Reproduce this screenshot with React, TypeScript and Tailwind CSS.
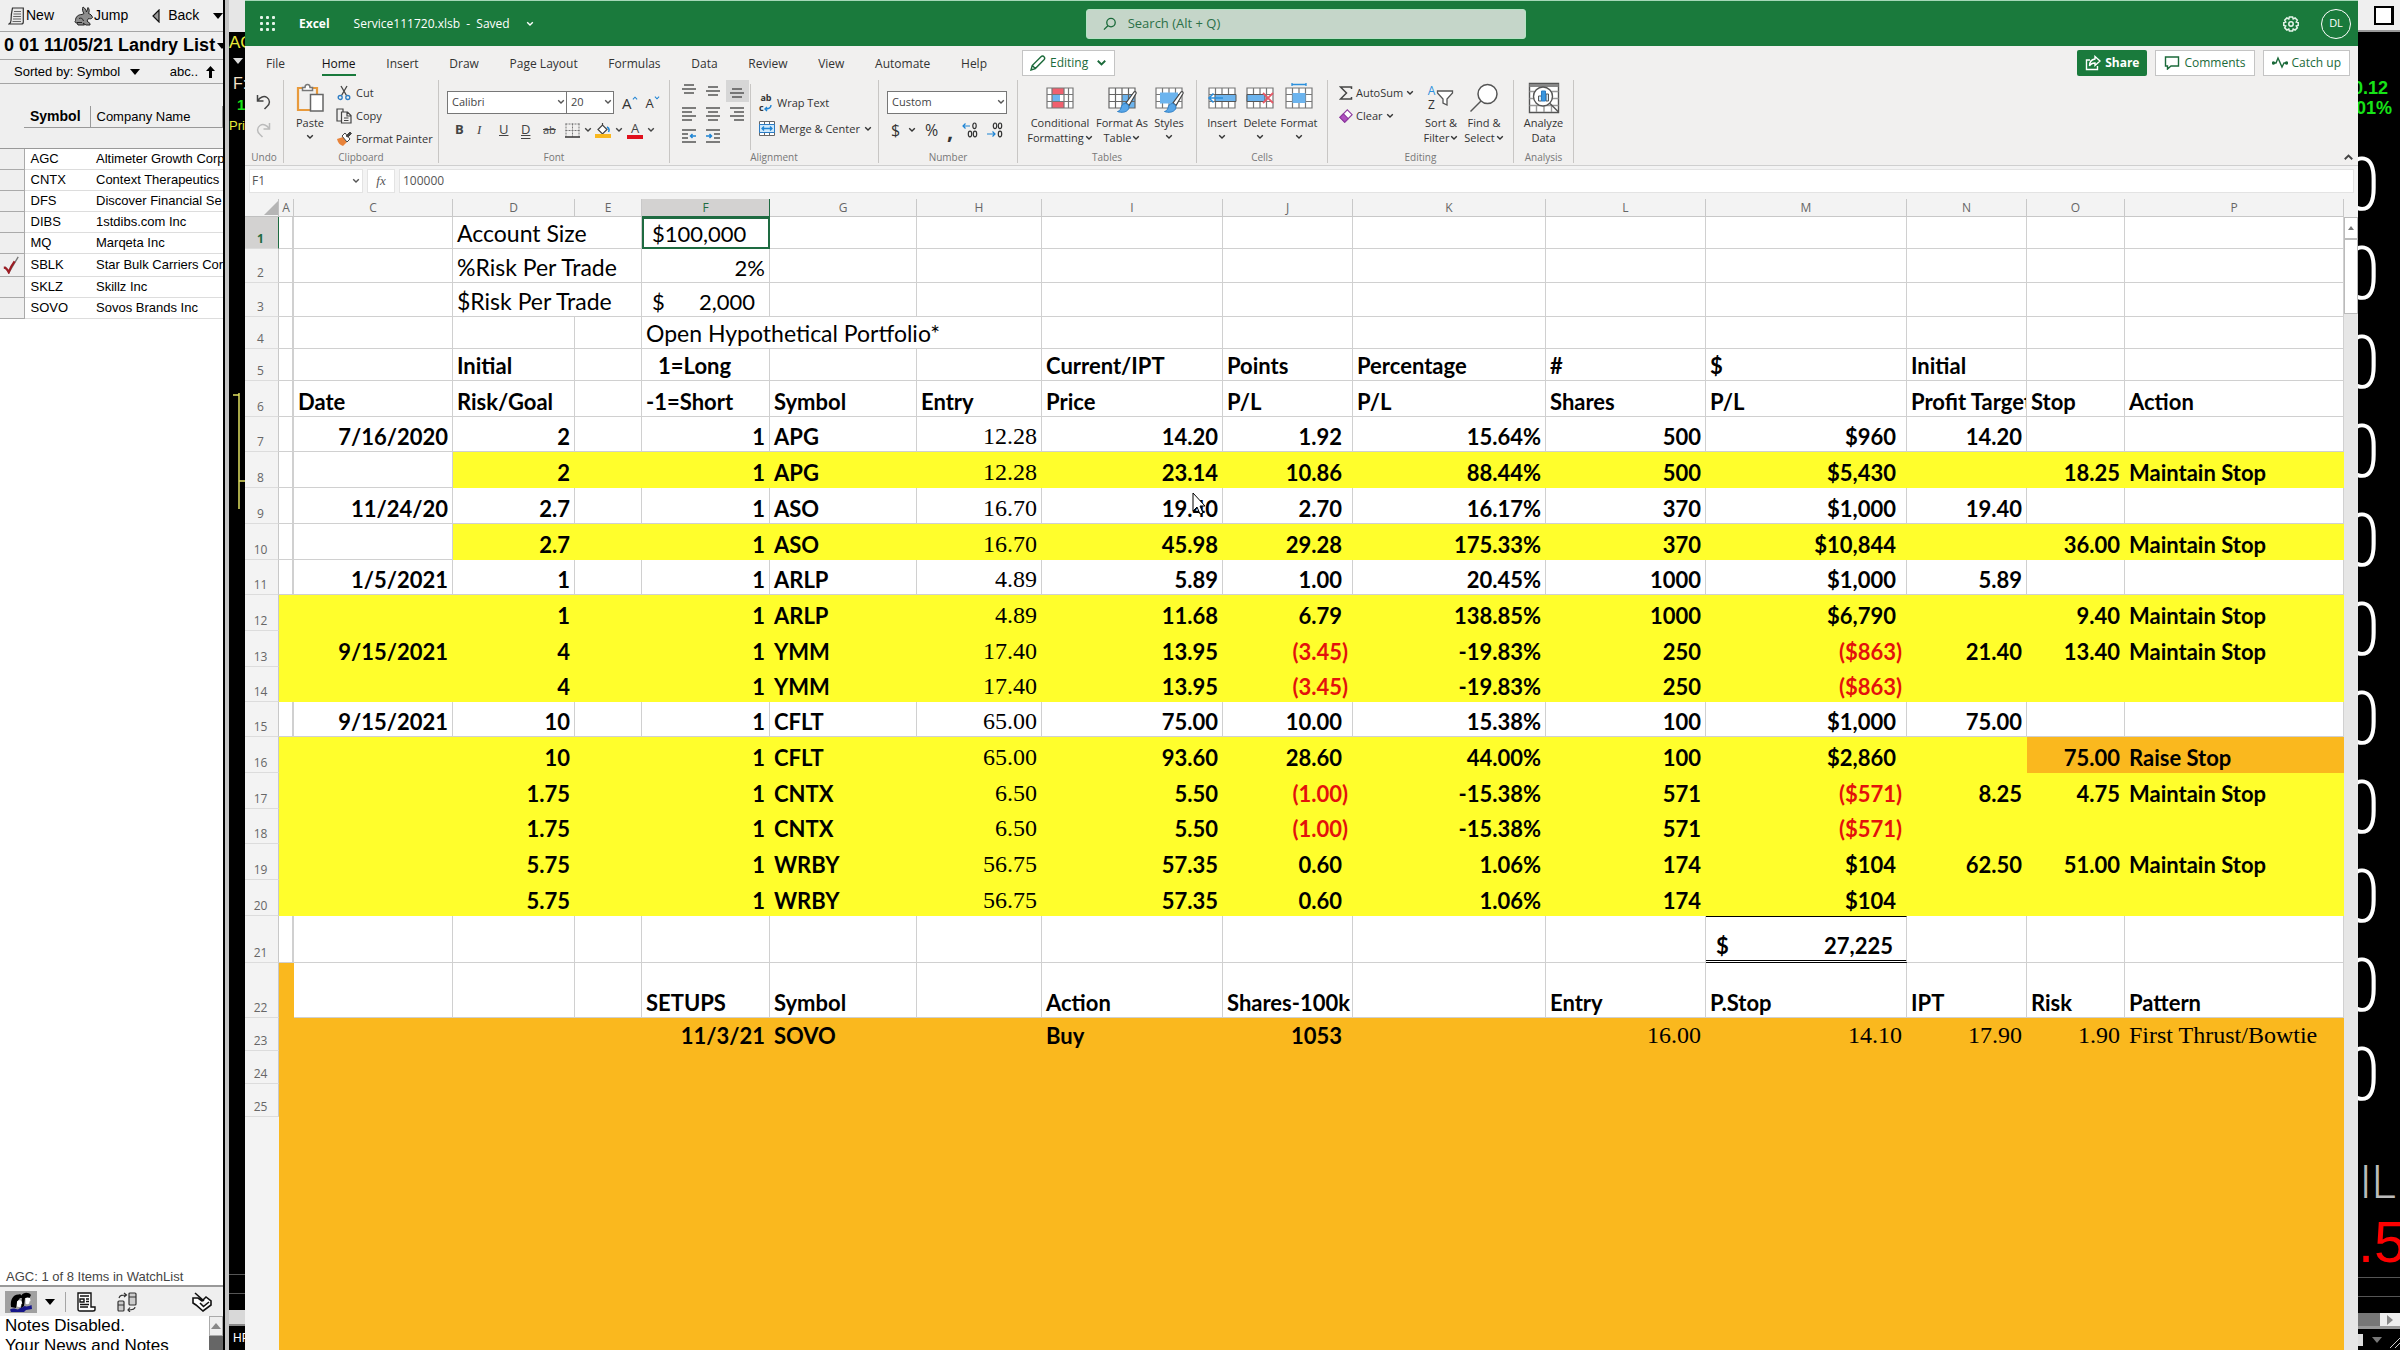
import React from 'react';
import clsx from 'clsx';

type IconProps = { className?: string };

const Chevron: React.FC<IconProps> = ({ className }) => (
    <svg viewBox="0 0 8 6" className={clsx('h-[6px] w-2 shrink-0', className)} fill="none" stroke="currentColor" strokeWidth="1.4">
        <path d="M1.2 1.3 4 4.1 6.8 1.3" />
    </svg>
);

/* ---------- Watch list (left) ---------- */

const watchList = [
    ['AGC', 'Altimeter Growth Corp'],
    ['CNTX', 'Context Therapeutics'],
    ['DFS', 'Discover Financial Se'],
    ['DIBS', '1stdibs.com Inc'],
    ['MQ', 'Marqeta Inc'],
    ['SBLK', 'Star Bulk Carriers Corp'],
    ['SKLZ', 'Skillz Inc'],
    ['SOVO', 'Sovos Brands Inc'],
];

const Caret: React.FC<IconProps> = ({ className }) => (
    <svg viewBox="0 0 10 6" className={clsx('h-[6px] w-[10px] shrink-0', className)} fill="currentColor">
        <path d="M0 0h10L5 6z" />
    </svg>
);

const WatchPanel = () => (
    <aside className="flex w-[225px] shrink-0 flex-col overflow-hidden border-r-2 border-black bg-[#efefef] font-['Liberation_Sans',sans-serif] text-black">
        <div className="flex h-8 shrink-0 items-center border-b border-[#a5a5a5] pl-2 text-[14px]">
            <button className="flex items-center gap-[2px]">
                <svg viewBox="0 0 16 18" className="h-[18px] w-4" fill="#e8e8e8" stroke="#333" strokeWidth="1.2">
                    <path d="M4.5 1h10.8v14c0 1-.8 2-2 2H1c1.500-1 2-2 2-3.500C3 9 3.500 5 4.500 1z" />
                    <path d="M6 4.500h7M5.500 7h7.500M5.200 9.500H13M5 12h8M4.500 14.500H13" stroke="#666" />
                </svg>
                New
            </button>
            <span className="mx-[10px] h-5 w-px bg-[#a5a5a5]" />
            <button className="flex items-center">
                <svg viewBox="0 0 20 20" className="h-5 w-5" fill="#8d8d8d" stroke="#222" strokeWidth="1">
                    <path d="M9 1c2 1 3 3 3.500 5L14 1.500c1.500 1.500 1.500 4 .5 6 2 .5 3.500 2 4 4-1 1.500-2.500 1.500-4 1l-1.500 2.500 3 2.500v1.500h-4L9 17l1.500 2H4l-1-2c-2 0-2.500-1.500-1.500-2.500C1.500 11 4 8.500 8 8.500l2-1C8.500 5.500 8 3 9 1z" />
                    <path d="M5 12.500c2-1 4 0 4.500 2.500M3 16.500h5" fill="none" />
                </svg>
                Jump
            </button>
            <span className="mx-[10px] h-5 w-px bg-[#a5a5a5]" />
            <button className="flex items-center">
                <svg viewBox="0 0 8 14" className="mr-2 ml-1 h-[14px] w-2" fill="#999" stroke="#111" strokeWidth="1.2">
                    <path d="M7 1v12L1 7z" />
                </svg>
                Back
                <Caret className="ml-[14px]" />
            </button>
        </div>
        <div className="flex h-7 shrink-0 items-center justify-between overflow-hidden border-b border-[#a5a5a5] pl-1 text-[18px] font-bold whitespace-nowrap">
            0 01 11/05/21 Landry List
            <Caret className="-mr-1" />
        </div>
        <div className="flex h-6 shrink-0 items-center border-b border-[#a5a5a5] pr-2 pl-[14px] text-[13px] whitespace-nowrap">
            Sorted by: Symbol
            <Caret className="ml-[10px]" />
            <span className="ml-auto">abc..</span>
            <svg viewBox="0 0 9 12" className="ml-2 h-3 w-[9px]" fill="#000">
                <path d="M4.500 0 9 5H6v7H3V5H0z" />
            </svg>
        </div>
        <table className="mt-[22px] w-full table-fixed text-left text-[13px] whitespace-nowrap">
            <colgroup>
                <col className="w-6" />
                <col className="w-[66px]" />
                <col />
            </colgroup>
            <thead>
                <tr className="h-5">
                    <td />
                    <th className="border-r border-b border-[#999] pl-[6px] text-[14px] font-bold">Symbol</th>
                    <th className="border-r border-b border-[#999] pl-[6px] font-normal">Company Name</th>
                </tr>
                <tr className="h-[21px]"><td colSpan={3} className="border-b border-[#999]" /></tr>
            </thead>
        </table>
        <div className="flex flex-1 flex-col bg-white">
            <table className="h-[170px] w-full table-fixed text-left text-[13px] leading-4 whitespace-nowrap">
                <colgroup>
                    <col className="w-6" />
                    <col className="w-[66px]" />
                    <col />
                </colgroup>
                <tbody>
                    {watchList.map(([symbol, company]) => (
                        <tr key={symbol}>
                            <td className="border-r border-b border-[#aaa] bg-[#efefef] p-0">
                                {symbol === 'SBLK' && (
                                    <svg viewBox="0 0 20 20" className="h-[18px] w-[22px]" fill="none">
                                        <path d="M3 12l5 6L18 1" stroke="#777" strokeWidth="1.5" />
                                        <path d="M2 13c2 0 4 2 5.500 5C9 14 11 10 14 6" stroke="#9c1c24" strokeWidth="2.500" />
                                    </svg>
                                )}
                            </td>
                            <td className="border-b border-[#ddd] p-0 pl-[6px]">{symbol}</td>
                            <td className="overflow-hidden border-b border-[#ddd] p-0 pl-[6px]">{company}</td>
                        </tr>
                    ))}
                </tbody>
            </table>
            <p className="mt-auto pl-[6px] text-[13px] leading-4 text-[#444]">AGC: 1 of 8 Items in WatchList</p>
        </div>
        <div className="flex h-[31px] shrink-0 items-center border-t-2 border-[#999] pr-[10px] pl-[5px]">
            <button aria-label="Groups" className="flex h-[22px] w-8 items-center justify-center bg-[#a0a0a0]">
                <svg viewBox="0 0 22 20" className="h-5 w-[22px]">
                    <path d="M1 15C0 8 3 2 9 2.500c1-.5 2 0 2.500 1C13 0 19 0 21 3l-1.500 3H10L7 10l-1 6z" fill="#000" />
                    <path d="M12 5l3 1-1 8-3 3z" fill="#000" />
                    <path d="M7 9.500c1.500-1.500 3.500-1.500 4.500-.5l.8 2.500-1 .5-.3 2c-1 1.500-3 1-4 .5zM15.500 6c1.500-1 3.500-.5 4.500 0l.5 3-1 .5-.3 2c-1 1-3 .8-3.700 0z" fill="#fff" />
                    <path d="M0 17.500c3-2 6-.5 8 0 2-1.500 3-2 4.500-2l2-1.500c2 1 5 0 7-1l.5 4-6 1-2 2H1z" fill="#16168a" />
                </svg>
            </button>
            <Caret className="ml-2" />
            <span className="ml-[10px] h-5 w-px bg-[#a5a5a5]" />
            <button aria-label="Notes" className="ml-[10px]">
                <svg viewBox="0 0 20 20" className="h-5 w-5" fill="#fff" stroke="#111" strokeWidth="1.4">
                    <path d="M2 1h13v14h4v2.500c0 1-1 1.500-2 1.500H4c-1.500 0-2-1-2-2z" />
                    <path d="M4 4h9M10 7h3M10 9.500h3M4 12.500h9M4 15h8M4 7h4v3H4z" />
                </svg>
            </button>
            <button aria-label="Transfer" className="ml-5">
                <svg viewBox="0 0 22 20" className="h-5 w-[22px]" fill="#ccc" stroke="#333" strokeWidth="1.2">
                    <rect x="2" y="9" width="6" height="10" rx="1" />
                    <rect x="13" y="1" width="7" height="12" rx="1" />
                    <path d="M2 13h6M13 5h7" />
                    <path d="M3 6c1-3 3-3 7-3M8 1l2.500 2L8 5M19 15c0 2-2 3-7 3M14 15.500 12 18l2 2" fill="none" />
                </svg>
            </button>
            <button aria-label="Tag" className="ml-auto">
                <svg viewBox="0 0 22 20" className="h-5 w-[22px]" fill="#fff" stroke="#111" strokeWidth="1.600">
                    <path d="M2 6h5l4 3 4-4 5 4v4l-8 6-7-6-3-2zM4 1l9 8M9 11l3.500 3.500L18 10" />
                </svg>
            </button>
        </div>
        <div className="flex h-[34px] shrink-0 overflow-hidden bg-white">
            <p className="flex-1 pl-[5px] text-[17px] leading-[20px] whitespace-nowrap">
                Notes Disabled.
                <br />
                Your News and Notes
            </p>
            <div className="w-[14px] bg-[#666]">
                <div className="flex h-5 items-center justify-center border border-[#aaa] bg-[#eee] text-[#888]">
                    <Caret className="rotate-180" />
                </div>
            </div>
        </div>
    </aside>
);

/* ---------- Chart slivers behind the workbook ---------- */

const ChartSliver = () => (
    <div className="flex w-5 shrink-0 flex-col overflow-hidden border-l-4 border-[#c4c4c4] bg-black font-['Liberation_Sans',sans-serif] whitespace-nowrap">
        <div className="-ml-1 h-8 shrink-0 bg-[#e6e6e6]" />
        <p className="text-[17px] leading-[22px] text-[#e8e83a]">AG</p>
        <Caret className="mt-1 ml-1 text-[#ddd]" />
        <p className="mt-2 ml-1 text-[16px] leading-6 text-[#f5e2c8]">F:</p>
        <p className="ml-2 text-[15px] leading-[18px] font-bold text-[#17e317]">1</p>
        <p className="text-[13px] leading-6 text-[#e8e83a]">Pri</p>
        <svg viewBox="0 0 16 118" className="mt-[255px] h-[118px] w-4 shrink-0" fill="none" stroke="#e0e060" strokeWidth="1.500">
            <path d="M4 2h6M10 0v116M10 88h6" />
        </svg>
        <div className="mt-auto h-5 shrink-0 border-y border-[#555]" />
        <div className="mt-4 h-4 shrink-0 border-b-2 border-[#888] bg-[#d8d8d8]" />
        <div className="h-6 shrink-0 px-1 pt-1 text-[12px] leading-4 text-white">HP</div>
    </div>
);

const QuoteSliver = () => (
    <div className="flex w-[42px] shrink-0 flex-col overflow-hidden bg-black font-['Liberation_Sans',sans-serif] whitespace-nowrap">
        <div className="flex h-8 shrink-0 items-center border-b-2 border-[#999] bg-[#efefef] pl-4">
            <button aria-label="Maximize" className="h-[19px] w-5 border-2 border-r-[3px] border-black bg-white" />
        </div>
        <div className="mt-[46px] flex flex-col items-end pr-2 text-[18px] leading-5 font-bold text-[#17e317]">
            <span className="pr-1">0.12</span>
            <span>.01%</span>
        </div>
        <div className="mt-[22px] flex flex-col items-end pr-5 font-['Roboto_Condensed','Liberation_Sans_Narrow',sans-serif] text-[74px] leading-[89px] font-light text-white">
            {Array.from({ length: 11 }, (_, i) => (
                <span key={i}>0</span>
            ))}
        </div>
        <p className="mt-auto pr-1 text-right font-['Roboto',sans-serif] text-[46px] leading-[50px] font-light text-[#bbb]">IL</p>
        <p className="mt-1 text-right text-[58px] leading-[62px] text-[#fe0000]">.5</p>
        <div className="mt-1 h-5 shrink-0 border-y border-[#555]" />
        <div className="mt-4 flex h-4 shrink-0 border-b-[3px] border-[#999]">
            <div className="w-[22px] bg-[#777]" />
            <div className="flex flex-1 items-center justify-center bg-[#eee] text-[#888]">
                <Caret className="-rotate-90" />
            </div>
        </div>
        <div className="flex h-[21px] shrink-0 items-center justify-between text-[#777]">
            <span className="h-3 w-[5px] bg-[#ddd]" />
            <Caret />
            <svg viewBox="0 0 10 16" className="h-4 w-[10px]" stroke="#ccc">
                <path d="M0 16 10 6M5 16l5-5" />
            </svg>
        </div>
    </div>
);

/* ---------- Excel chrome ---------- */

const TitleBar = () => (
    <header className="flex h-[46px] shrink-0 items-center border-t border-[#a5d8b8] bg-[#1a7a3c] pr-[7px] pl-[15px] text-white">
        <div className="flex flex-1 items-center">
            <button aria-label="App launcher">
                <svg viewBox="0 0 15 15" className="h-[15px] w-[15px]" fill="#e6f5ea">
                    {[0, 6, 12].map((x) => [0, 6, 12].map((y) => <rect key={x + '-' + y} x={x} y={y} width="3" height="3" rx="1" />))}
                </svg>
            </button>
            <span className="ml-6 text-[12px] font-bold">Excel</span>
            <button className="ml-6 flex items-center text-[12px]">
                Service111720.xlsb&nbsp; - &nbsp;Saved
                <Chevron className="ml-4" />
            </button>
        </div>
        <label className="flex h-[30px] w-[440px] items-center rounded-[3px] border border-[#b5e3c4] bg-[#c5d6c9] pl-4 text-[#1b6a3a]">
            <svg viewBox="0 0 14 14" className="h-[14px] w-[14px]" fill="none" stroke="currentColor" strokeWidth="1.400">
                <circle cx="8.500" cy="5.500" r="4.500" />
                <path d="M5.200 8.800 1 13" />
            </svg>
            <input aria-label="Search" placeholder="Search (Alt + Q)" className="ml-3 w-full bg-transparent text-[13px] outline-none placeholder:text-[#2c7048]" />
        </label>
        <div className="flex flex-1 items-center justify-end">
            <button aria-label="Settings">
                <svg viewBox="0 0 16 16" className="h-4 w-4" fill="none" stroke="#e6f5ea" strokeWidth="1.500">
                    <path d="M6.400 1h3.200l.6 1.900 1.900-.9 2.200 2.200-1 1.800 1.900.6v2.800l-1.900.6 1 1.800-2.200 2.200-1.900-.9-.6 1.900H6.400l-.6-1.900-1.900.9-2.200-2.200 1-1.800-1.900-.6V6.600l1.900-.6-1-1.800L3.900 2l1.900.9z" />
                    <circle cx="8" cy="8" r="2.200" />
                </svg>
            </button>
            <button className="ml-[22px] h-[30px] w-[30px] rounded-full border border-white text-[11px]">DL</button>
        </div>
    </header>
);

const tabs = ['File', 'Home', 'Insert', 'Draw', 'Page Layout', 'Formulas', 'Data', 'Review', 'View', 'Automate', 'Help'];

const TabBar = () => (
    <nav className="flex h-[34px] shrink-0 items-center pr-2 pl-[21px] text-[12px] text-[#333]">
        <div className="flex w-[721px] justify-between">
            {tabs.map((tab) => (
                <a
                    key={tab}
                    href="#"
                    className={clsx(
                        'border-b-2 pt-[3px] leading-[20px] whitespace-nowrap',
                        tab === 'Home' ? 'border-[#1a7a3c] text-[#111]' : 'border-transparent',
                        tab === 'File' && 'mr-[6px]',
                    )}
                >
                    {tab}
                </a>
            ))}
        </div>
        <button className="ml-[35px] flex h-[26px] items-center gap-1 border border-[#c4c4c4] bg-white px-[7px] text-[#1b6a3a]">
            <svg viewBox="0 0 16 16" className="h-4 w-4" fill="none" stroke="currentColor" strokeWidth="1.400">
                <path d="M1 15l1.200-4.500L11 1.700c1-1 2.300-.8 3 0 .8.800.9 2 0 3L5.300 13.600zM2.300 10.600l3 3" />
            </svg>
            Editing
            <Chevron className="ml-1 !h-2 !w-[11px]" />
        </button>
        <div className="ml-auto flex gap-2">
            <button className="flex h-[26px] items-center gap-1 rounded-[2px] bg-[#1a7a3c] px-2 font-bold text-white">
                <svg viewBox="0 0 16 16" className="h-4 w-4" fill="none" stroke="currentColor" strokeWidth="1.400">
                    <path d="M5 5H1.500v9.500h11V11M10 1.500 15 6l-5 4.500V8C7 8 5.500 9 4.500 11c0-3.500 2-6.500 5.500-7z" />
                </svg>
                Share
            </button>
            <button className="flex h-[26px] items-center gap-1 border border-[#c4c4c4] bg-white px-2 text-[#1b6a3a]">
                <svg viewBox="0 0 16 14" className="h-[14px] w-4" fill="none" stroke="currentColor" strokeWidth="1.400">
                    <path d="M1.500 1h13v9H7l-3.500 3V10h-2z" />
                </svg>
                Comments
            </button>
            <button className="flex h-[26px] items-center gap-1 border border-[#c4c4c4] bg-white px-2 text-[#1b6a3a]">
                <svg viewBox="0 0 16 14" className="h-[14px] w-4" fill="none" stroke="currentColor" strokeWidth="1.400">
                    <path d="M1 7h3l2-5 4 9 2-4h3" />
                    <circle cx="1.500" cy="7" r="1" fill="currentColor" />
                    <circle cx="14.500" cy="7" r="1" fill="currentColor" />
                </svg>
                Catch up
            </button>
        </div>
    </nav>
);

type GroupProps = { label: string; className: string; children: React.ReactNode };

const Group: React.FC<GroupProps> = ({ label, className, children }) => (
    <section className={clsx('flex shrink-0 flex-col border-r border-[#c8c6c4]', className)}>
        <div className="flex flex-1">{children}</div>
        <h2 className="text-center text-[10px] leading-[12px] text-[#777]">{label}</h2>
    </section>
);

type BigButtonProps = { icon: React.ReactNode; lines: string[]; className?: string; chevron?: 'below' | 'inline' };

const BigButton: React.FC<BigButtonProps> = ({ icon, lines, className, chevron }) => (
    <button className={clsx('flex shrink-0 flex-col items-center text-[11px] leading-[15px] text-[#333]', className)}>
        <span className="flex h-[35px] items-center">{icon}</span>
        {lines.map((line, i) => (
            <span key={line} className="flex items-center gap-px whitespace-nowrap">
                {line}
                {chevron === 'inline' && i === lines.length - 1 && <Chevron />}
            </span>
        ))}
        {chevron === 'below' && <Chevron className="mt-1" />}
    </button>
);

const SheetIcon: React.FC<{ children: React.ReactNode }> = ({ children }) => (
    <svg viewBox="0 0 30 30" className="h-[30px] w-[30px]" fill="none">
        <path d="M2 5h26v20H2z" fill="#fff" />
        {children}
    </svg>
);

const gridPath = 'M2 5h26v20H2zM2 11.500h26M2 18.500h26M8.500 5v20M15 5v20M21.500 5v20';

const Brush = () => (
    <>
        <path d="M27 9 19 20l3 2.500 7-12c.5-1.500-1-2.500-2-1.500z" fill="#fff" stroke="#444" strokeWidth="1.200" />
        <path d="M18.500 20.500c-3 0-4 2-4.500 4.500-.5 2-2 3-3.500 3.500 4 1.500 9 1 11-2.500 1-2 0-5-3-5.500z" fill="#58a6e8" stroke="#2b7cc4" />
    </>
);

const LinesIcon: React.FC<{ d: string; active?: boolean; label: string; arrow?: string }> = ({ d, active, label, arrow }) => (
    <button aria-label={label} className={clsx('flex h-[22px] w-[23px] items-center justify-center', active && 'bg-[#d6d6d6]')}>
        <svg viewBox="0 0 14 14" className="h-[14px] w-[14px]" fill="none" stroke="#555" strokeWidth="1.300">
            <path d={d} />
            {arrow && <path d={arrow} stroke="#1e84d4" strokeWidth="1.500" />}
        </svg>
    </button>
);

const Picker: React.FC<{ label: string; value: string; className: string }> = ({ label, value, className }) => (
    <div className={clsx('relative', className)}>
        <select aria-label={label} className="h-[23px] w-full appearance-none border border-[#777] bg-white pl-1 text-[11px] text-[#444]">
            <option>{value}</option>
        </select>
        <Chevron className="pointer-events-none absolute top-2 right-[2px] text-[#555]" />
    </div>
);

const Ribbon = () => (
    <div className="flex h-[86px] shrink-0 border-b border-[#cfcfcf] text-[11px] text-[#333]">
        <div className="flex pb-[2px]">
            <Group label="Undo" className="w-[39px]">
                <div className="flex flex-col gap-3 pt-[14px] pl-[11px] text-[#444]">
                    <button aria-label="Undo">
                        <svg viewBox="0 0 15 16" className="h-4 w-[15px]" fill="none" stroke="currentColor" strokeWidth="1.500">
                            <path d="M1.500 1v6h6M1.800 6.500C4 3 8 1.500 11 3.500c3.500 2.500 3 6.500 0 9L8.500 15" />
                        </svg>
                    </button>
                    <button aria-label="Redo" className="text-[#bbb]">
                        <svg viewBox="0 0 15 16" className="h-4 w-[15px]" fill="none" stroke="currentColor" strokeWidth="1.500">
                            <path d="M13.500 1v6h-6M13.200 6.500C11 3 7 1.500 4 3.500c-3.500 2.500-3 6.500 0 9L6.500 15" />
                        </svg>
                    </button>
                </div>
            </Group>
            <Group label="Clipboard" className="w-[155px]">
                <BigButton
                    className="w-[52px]"
                    lines={['Paste']}
                    chevron="below"
                    icon={
                        <svg viewBox="0 0 28 30" className="h-[30px] w-7" fill="none" strokeWidth="1.500">
                            <path d="M8 5H2v22h12" stroke="#e89a3c" strokeWidth="2.200" />
                            <path d="M15 5h6v6" stroke="#e89a3c" strokeWidth="2.200" />
                            <path d="M6.500 7.500V4.500H9C9 2.500 10 1.500 11.500 1.500S14 2.500 14 4.500h2.500v3z" fill="#fff" stroke="#777" />
                            <path d="M14.500 11.500H27v16.500H14.500z" fill="#fff" stroke="#666" />
                        </svg>
                    }
                />
                <div className="flex flex-col pt-px leading-[23px] whitespace-nowrap">
                    <button className="flex items-center gap-1">
                        <svg viewBox="0 0 16 16" className="h-4 w-4" fill="none" strokeWidth="1.300">
                            <path d="M5 1l5.500 9.500M11 1 5.500 10.500" stroke="#444" />
                            <circle cx="4.200" cy="12.500" r="2" stroke="#2b7cc4" />
                            <circle cx="11.800" cy="12.500" r="2" stroke="#2b7cc4" />
                        </svg>
                        Cut
                    </button>
                    <button className="flex items-center gap-1">
                        <svg viewBox="0 0 16 16" className="h-4 w-4" fill="none" stroke="#444" strokeWidth="1.200">
                            <path d="M5 13H1V1h6v3M5.500 4h6L15 7.500V15H5.500zM11 4v4h4M8 10h4.500M8 12.500h4.500" />
                        </svg>
                        Copy
                    </button>
                    <button className="flex items-center gap-1">
                        <svg viewBox="0 0 16 16" className="h-4 w-4">
                            <path d="M1 8l6-2 4 5-4 4c-3-1-5-3-6-7z" fill="#e8833a" />
                            <path d="M6 5l3-3 5 6-3 3z" fill="#fff" stroke="#444" />
                            <path d="M10 5l4-4 1.500 1.500L12 6z" fill="#444" stroke="#444" />
                        </svg>
                        Format Painter
                    </button>
                </div>
            </Group>
            <Group label="Font" className="w-[231px]">
                <div className="flex w-full flex-col gap-1 pt-[11px] pl-2">
                    <div className="flex items-center">
                        <Picker label="Font" value="Calibri" className="w-[120px]" />
                        <Picker label="Font size" value="20" className="-ml-px w-[48px]" />
                        <button aria-label="Grow font" className="ml-2 flex text-[15px] leading-5">
                            A
                            <Chevron className="mt-[2px] !w-[6px] rotate-180 text-[#1e84d4]" />
                        </button>
                        <button aria-label="Shrink font" className="ml-2 flex text-[13px] leading-5">
                            A
                            <Chevron className="mt-[2px] !w-[6px] text-[#1e84d4]" />
                        </button>
                    </div>
                    <div className="flex h-6 items-center pl-2 text-[13px] text-[#444]">
                        <button className="w-[22px] text-left font-bold">B</button>
                        <button className="w-[22px] text-left font-['Liberation_Serif',serif] italic">I</button>
                        <button className="w-[22px] text-left underline">U</button>
                        <button className="w-[22px] text-left underline decoration-double">D</button>
                        <button className="w-[22px] text-left text-[11px] line-through">ab</button>
                        <button aria-label="Borders" className="flex w-[30px] items-center gap-1">
                            <svg viewBox="0 0 15 15" className="h-[15px] w-[15px]" fill="none" stroke="#777">
                                <path d="M.5 1h14M.5 7.500h14M1 .5v13M7.500.5v13M14 .5v13" strokeDasharray="2 1" />
                                <path d="M0 14h15" stroke="#333" strokeWidth="1.500" />
                            </svg>
                            <Chevron />
                        </button>
                        <button aria-label="Fill colour" className="flex w-8 items-center gap-1">
                            <svg viewBox="0 0 16 16" className="h-4 w-4" fill="none">
                                <path d="M3 7.500 7.500 3l4.500 4.500L7.500 12zM7.500 3V1" stroke="#444" strokeWidth="1.200" fill="#fff" />
                                <path d="M12 5c2 1 2.500 3 1.500 5" stroke="#1e84d4" strokeWidth="1.500" />
                                <path d="M0 12h16v4H0z" fill="#fab81e" />
                            </svg>
                            <Chevron />
                        </button>
                        <button aria-label="Font colour" className="flex w-8 items-center gap-1">
                            <span className="w-4 border-b-4 border-[#e0101c] text-center leading-[13px]">A</span>
                            <Chevron />
                        </button>
                    </div>
                </div>
            </Group>
            <Group label="Alignment" className="w-[209px]">
                <div className="grid h-[68px] w-[80px] grid-cols-3 pl-[7px]">
                    <LinesIcon label="Top align" d="M2 1h10M0 5h14M2 9h10" />
                    <LinesIcon label="Middle align" d="M2 3h10M0 7h14M2 11h10" />
                    <LinesIcon label="Bottom align" d="M2 5h10M0 9h14M2 13h10" active />
                    <LinesIcon label="Align left" d="M0 1h14M0 5h10M0 9h14M0 13h10" />
                    <LinesIcon label="Center" d="M0 1h14M2 5h10M0 9h14M2 13h10" />
                    <LinesIcon label="Align right" d="M0 1h14M4 5h10M0 9h14M4 13h10" />
                    <LinesIcon label="Decrease indent" d="M0 1h14M0 5h6M0 9h6M0 13h14" arrow="M14 7H8.500M10.500 5l-2 2 2 2" />
                    <LinesIcon label="Increase indent" d="M0 1h14M8 5h6M8 9h6M0 13h14" arrow="M0 7h5.500M3.500 5l2 2-2 2" />
                </div>
                <div className="mt-1 h-[66px] w-px bg-[#c8c6c4]" />
                <div className="flex flex-col gap-[3px] pt-[11px] pl-2 leading-[23px] whitespace-nowrap">
                    <button className="flex h-[23px] items-center gap-1">
                        <span className="flex w-[14px] flex-col text-[9px] leading-[10px] font-bold">
                            <span>ab</span>
                            <span className="flex items-center">
                                c
                                <svg viewBox="0 0 8 8" className="h-2 w-2" fill="none" stroke="#1e84d4" strokeWidth="1.400">
                                    <path d="M7 1c0 3-2 4-6 4M3 3 1 5l2 2" />
                                </svg>
                            </span>
                        </span>
                        Wrap Text
                    </button>
                    <button className="flex items-center gap-1">
                        <svg viewBox="0 0 16 15" className="h-[15px] w-4" fill="#fff" stroke="#666">
                            <path d="M.5.500h15v14H.5zM5.500.500v14M10.500.500v14" />
                            <path d="M.5 3.500h15v8H.5z" fill="#cfe8fa" stroke="#2b7cc4" />
                            <path d="M3 7.500h10M5 5.500l-2 2 2 2M11 5.500l2 2-2 2" fill="none" stroke="#1e84d4" strokeWidth="1.300" />
                        </svg>
                        Merge &amp; Center <Chevron />
                    </button>
                </div>
            </Group>
            <Group label="Number" className="w-[139px]">
                <div className="flex flex-col gap-1 pt-[11px] pl-2">
                    <Picker label="Number format" value="Custom" className="w-[120px]" />
                    <div className="flex h-6 items-center justify-between pr-1 pl-1 text-[16px] text-[#333]">
                        <button className="flex items-center gap-2">
                            $ <Chevron />
                        </button>
                        <button>%</button>
                        <button className="text-[22px] leading-4 font-bold">,</button>
                        <button aria-label="Increase decimal">
                            <svg viewBox="0 0 16 16" className="h-4 w-4" fill="none" stroke="#333" strokeWidth="1.200">
                                <ellipse cx="12.500" cy="3.800" rx="1.700" ry="2.800" />
                                <ellipse cx="8" cy="12" rx="1.700" ry="2.800" />
                                <ellipse cx="13" cy="12" rx="1.700" ry="2.800" />
                                <path d="M8 4H1M3.500 1.500 1 4l2.500 2.500" stroke="#1e84d4" />
                            </svg>
                        </button>
                        <button aria-label="Decrease decimal">
                            <svg viewBox="0 0 16 16" className="h-4 w-4" fill="none" stroke="#333" strokeWidth="1.200">
                                <ellipse cx="8" cy="3.800" rx="1.700" ry="2.800" />
                                <ellipse cx="13" cy="3.800" rx="1.700" ry="2.800" />
                                <ellipse cx="13" cy="12" rx="1.700" ry="2.800" />
                                <path d="M0 12h8M5.500 9.500 8 12l-2.500 2.500" stroke="#1e84d4" />
                            </svg>
                        </button>
                    </div>
                </div>
            </Group>
            <Group label="Tables" className="w-[179px]">
                <BigButton
                    className="ml-[5px] w-[74px]"
                    lines={['Conditional', 'Formatting']}
                    chevron="inline"
                    icon={
                        <SheetIcon>
                            <path d="M7 5h12v6.500H7zM7 18.500h12V25H7z" fill="#f0606e" />
                            <path d="M7 11.500h8v7H7z" fill="#6cb4ee" />
                            <path d="M2 5h26v20H2zM2 11.500h26M2 18.500h26M7 5v20M19 5v20M23.500 5v20" stroke="#777" strokeWidth="1.200" />
                        </SheetIcon>
                    }
                />
                <BigButton
                    className="w-[50px]"
                    lines={['Format As', 'Table']}
                    chevron="inline"
                    icon={
                        <SheetIcon>
                            <path d="M15 11.500h13V25H15z" fill="#6cb4ee" />
                            <path d={gridPath} stroke="#666" strokeWidth="1.200" />
                            <Brush />
                        </SheetIcon>
                    }
                />
                <BigButton
                    className="w-[44px]"
                    lines={['Styles']}
                    chevron="below"
                    icon={
                        <SheetIcon>
                            <path d={gridPath} stroke="#777" strokeWidth="1.200" />
                            <path d="M6 9.500h18v11H6z" fill="#6cb4ee" />
                            <Brush />
                        </SheetIcon>
                    }
                />
            </Group>
            <Group label="Cells" className="w-[131px]">
                <BigButton
                    className="ml-[6px] w-[38px]"
                    lines={['Insert']}
                    chevron="below"
                    icon={
                        <SheetIcon>
                            <path d={gridPath} stroke="#777" strokeWidth="1.200" />
                            <path d="M8 11.500h21v7H8z" fill="#6cb4ee" stroke="#555" />
                            <path d="M16 15H2M6.500 10.500 2 15l4.500 4.500" stroke="#2b8fdc" strokeWidth="1.600" />
                        </SheetIcon>
                    }
                />
                <BigButton
                    className="w-[38px]"
                    lines={['Delete']}
                    chevron="below"
                    icon={
                        <SheetIcon>
                            <path d={gridPath} stroke="#777" strokeWidth="1.200" />
                            <path d="M2 11.500h18v7H2z" fill="#6cb4ee" stroke="#555" />
                            <path d="M18 10l10 10M28 10 18 20" stroke="#e85a68" strokeWidth="1.800" />
                        </SheetIcon>
                    }
                />
                <BigButton
                    className="w-[40px]"
                    lines={['Format']}
                    chevron="below"
                    icon={
                        <SheetIcon>
                            <path d={gridPath} stroke="#777" strokeWidth="1.200" />
                            <path d="M8.500 10h13v10h-13z" fill="#6cb4ee" />
                            <path d="M8 1.500h14M8 0v3M22 0v3" stroke="#2b8fdc" strokeWidth="1.300" />
                        </SheetIcon>
                    }
                />
            </Group>
            <Group label="Editing" className="w-[186px]">
                <div className="flex w-[92px] flex-col pt-px pl-[11px] leading-[23px] whitespace-nowrap">
                    <button className="flex items-center gap-[3px]">
                        <svg viewBox="0 0 14 14" className="h-[14px] w-[14px]" fill="none" stroke="#444" strokeWidth="1.500">
                            <path d="M12.500 3V1H1.500L7.500 7l-6 6h11v-2" />
                        </svg>
                        AutoSum <Chevron />
                    </button>
                    <button className="flex items-center gap-[3px]">
                        <svg viewBox="0 0 16 16" className="h-[14px] w-[14px]" fill="#fff" stroke="#8e3a9e" strokeWidth="1.300">
                            <path d="M1 9.500 9.500 1 15 6.500 6.500 15z" />
                            <path d="M1 9.500 5 5.500 10.500 11l-4 4z" fill="#b04fc0" />
                        </svg>
                        Clear <Chevron />
                    </button>
                </div>
                <BigButton
                    className="w-[42px]"
                    lines={['Sort &', 'Filter']}
                    chevron="inline"
                    icon={
                        <span className="flex items-center">
                            <span className="flex flex-col text-[12px] leading-[14px]">
                                <span className="text-[#2b8fdc]">A</span>
                                <span>Z</span>
                            </span>
                            <svg viewBox="0 0 18 18" className="ml-px h-[18px] w-[18px]" fill="#fff" stroke="#555" strokeWidth="1.300">
                                <path d="M1.500 2h15v2L11 10v6l-4-2v-4L1.500 4z" />
                            </svg>
                        </span>
                    }
                />
                <BigButton
                    className="w-[44px]"
                    lines={['Find &', 'Select']}
                    chevron="inline"
                    icon={
                        <svg viewBox="0 0 30 30" className="h-[30px] w-[30px]" fill="#fff" stroke="#555" strokeWidth="1.500">
                            <circle cx="18.500" cy="11" r="9.500" />
                            <path d="M12 18 1.500 28.500" />
                        </svg>
                    }
                />
            </Group>
            <Group label="Analysis" className="w-[60px]">
                <BigButton
                    className="w-full"
                    lines={['Analyze', 'Data']}
                    icon={
                        <svg viewBox="0 0 32 32" className="h-8 w-8" fill="#fff" stroke="#555" strokeWidth="1.400">
                            <path d="M1.500 1.500h29v29h-29z" />
                            <path d="M1.500 3.500h29" strokeWidth="3" stroke="#888" />
                            <path d="M1.500 9.500h29M1.500 16.500h29M1.500 23.500h29M8.500 23v7M16 23v7M23.500 23v7" stroke="#999" />
                            <circle cx="15" cy="14.500" r="9.500" />
                            <path d="M22 21.500 30.500 30" />
                            <path d="M10.500 14h3v5h-3zM18 12h2.500v7H18z" fill="#cfe8fa" strokeWidth="1" />
                            <path d="M13.500 9h4v10h-4z" fill="#3a96dd" stroke="#2b7cc4" strokeWidth="1" />
                        </svg>
                    }
                />
            </Group>
        </div>
        <button aria-label="Collapse ribbon" className="mt-auto mr-1 mb-1 ml-auto text-[#444]">
            <Chevron className="!h-2 !w-[11px] rotate-180" />
        </button>
    </div>
);

const FormulaBar = () => (
    <div className="flex h-[33px] shrink-0 gap-1 bg-[#f3f3f3] pt-[3px] pr-1 pb-[6px] pl-1 text-[12px] text-[#555]">
        <div className="flex w-[114px] items-center border border-[#e3e3e3] bg-white pr-[2px] pl-[2px]">
            <input aria-label="Name box" defaultValue="F1" className="w-full bg-transparent outline-none" />
            <Chevron />
        </div>
        <button className="w-7 border border-[#e3e3e3] bg-white font-['Liberation_Serif',serif] text-[13px] italic">fx</button>
        <input aria-label="Formula" defaultValue="100000" className="flex-1 border border-[#e3e3e3] bg-white pl-[3px] outline-none" />
    </div>
);

/* ---------- Sheet ---------- */

const columns = [
    ['A', 'w-[15px]'],
    ['C', 'w-[159px]'],
    ['D', 'w-[122px]'],
    ['E', 'w-[67px]'],
    ['F', 'w-[128px]'],
    ['G', 'w-[147px]'],
    ['H', 'w-[125px]'],
    ['I', 'w-[181px]'],
    ['J', 'w-[130px]'],
    ['K', 'w-[193px]'],
    ['L', 'w-[160px]'],
    ['M', 'w-[201px]'],
    ['N', 'w-[120px]'],
    ['O', 'w-[98px]'],
    ['P', ''],
];

type Row = {
    n: number;
    height: string;
    fill?: 'all' | 'fromD' | 'orange' | 'firstOrange';
    kind?: 'head' | 'plain' | 'setup';
    span?: Record<string, number>;
    cells?: Record<string, string>;
};

const rows: Row[] = [
    { n: 1, height: 'h-8', kind: 'plain', span: { D: 2 }, cells: { D: 'Account Size', F: '$100,000' } },
    { n: 2, height: 'h-[34px]', kind: 'plain', span: { D: 2 }, cells: { D: '%Risk Per Trade', F: '2%' } },
    { n: 3, height: 'h-[34px]', kind: 'plain', span: { D: 2 }, cells: { D: '$Risk Per Trade', F: '$|2,000' } },
    { n: 4, height: 'h-8', kind: 'plain', span: { F: 3 }, cells: { F: 'Open Hypothetical Portfolio*' } },
    { n: 5, height: 'h-8', kind: 'head', cells: { D: 'Initial', F: '1=Long', I: 'Current/IPT', J: 'Points', K: 'Percentage', L: '#', M: '$', N: 'Initial' } },
    { n: 6, height: 'h-9', kind: 'head', cells: { C: 'Date', D: 'Risk/Goal', F: '-1=Short', G: 'Symbol', H: 'Entry', I: 'Price', J: 'P/L', K: 'P/L', L: 'Shares', M: 'P/L', N: 'Profit Target', O: 'Stop', P: 'Action' } },
    { n: 7, height: 'h-[35px]', cells: { C: '7/16/2020', D: '2', F: '1', G: 'APG', H: '12.28', I: '14.20', J: '1.92', K: '15.64%', L: '500', M: '$960', N: '14.20' } },
    { n: 8, height: 'h-9', fill: 'fromD', cells: { D: '2', F: '1', G: 'APG', H: '12.28', I: '23.14', J: '10.86', K: '88.44%', L: '500', M: '$5,430', O: '18.25', P: 'Maintain Stop' } },
    { n: 9, height: 'h-9', cells: { C: '11/24/20', D: '2.7', F: '1', G: 'ASO', H: '16.70', I: '19.40', J: '2.70', K: '16.17%', L: '370', M: '$1,000', N: '19.40' } },
    { n: 10, height: 'h-9', fill: 'fromD', cells: { D: '2.7', F: '1', G: 'ASO', H: '16.70', I: '45.98', J: '29.28', K: '175.33%', L: '370', M: '$10,844', O: '36.00', P: 'Maintain Stop' } },
    { n: 11, height: 'h-[35px]', cells: { C: '1/5/2021', D: '1', F: '1', G: 'ARLP', H: '4.89', I: '5.89', J: '1.00', K: '20.45%', L: '1000', M: '$1,000', N: '5.89' } },
    { n: 12, height: 'h-9', fill: 'all', cells: { D: '1', F: '1', G: 'ARLP', H: '4.89', I: '11.68', J: '6.79', K: '138.85%', L: '1000', M: '$6,790', O: '9.40', P: 'Maintain Stop' } },
    { n: 13, height: 'h-9', fill: 'all', cells: { C: '9/15/2021', D: '4', F: '1', G: 'YMM', H: '17.40', I: '13.95', J: '(3.45)', K: '-19.83%', L: '250', M: '($863)', N: '21.40', O: '13.40', P: 'Maintain Stop' } },
    { n: 14, height: 'h-[35px]', fill: 'all', cells: { D: '4', F: '1', G: 'YMM', H: '17.40', I: '13.95', J: '(3.45)', K: '-19.83%', L: '250', M: '($863)' } },
    { n: 15, height: 'h-[35px]', cells: { C: '9/15/2021', D: '10', F: '1', G: 'CFLT', H: '65.00', I: '75.00', J: '10.00', K: '15.38%', L: '100', M: '$1,000', N: '75.00' } },
    { n: 16, height: 'h-9', fill: 'all', cells: { D: '10', F: '1', G: 'CFLT', H: '65.00', I: '93.60', J: '28.60', K: '44.00%', L: '100', M: '$2,860', O: '75.00', P: 'Raise Stop' } },
    { n: 17, height: 'h-9', fill: 'all', cells: { D: '1.75', F: '1', G: 'CNTX', H: '6.50', I: '5.50', J: '(1.00)', K: '-15.38%', L: '571', M: '($571)', N: '8.25', O: '4.75', P: 'Maintain Stop' } },
    { n: 18, height: 'h-[35px]', fill: 'all', cells: { D: '1.75', F: '1', G: 'CNTX', H: '6.50', I: '5.50', J: '(1.00)', K: '-15.38%', L: '571', M: '($571)' } },
    { n: 19, height: 'h-9', fill: 'all', cells: { D: '5.75', F: '1', G: 'WRBY', H: '56.75', I: '57.35', J: '0.60', K: '1.06%', L: '174', M: '$104', N: '62.50', O: '51.00', P: 'Maintain Stop' } },
    { n: 20, height: 'h-9', fill: 'all', cells: { D: '5.75', F: '1', G: 'WRBY', H: '56.75', I: '57.35', J: '0.60', K: '1.06%', L: '174', M: '$104' } },
    { n: 21, height: 'h-[47px]', cells: { M: '$|27,225' } },
    { n: 22, height: 'h-[55px]', kind: 'head', fill: 'firstOrange', cells: { F: 'SETUPS', G: 'Symbol', I: 'Action', J: 'Shares-100k', L: 'Entry', M: 'P.Stop', N: 'IPT', O: 'Risk', P: 'Pattern' } },
    { n: 23, height: 'h-[33px]', kind: 'setup', fill: 'orange', cells: { F: '11/3/21', G: 'SOVO', I: 'Buy', J: '1053', L: '16.00', M: '14.10', N: '17.90', O: '1.90', P: 'First Thrust/Bowtie' } },
    { n: 24, height: 'h-[33px]', fill: 'orange' },
    { n: 25, height: 'h-[33px]', fill: 'orange' },
];

const YELLOW = 'bg-[#fffe2c] border-[#fffe2c]';
const ORANGE = 'bg-[#fab81e] border-[#fab81e]';
const WHITE = 'bg-white border-[#d0d0d0]';

const fillFor = (row: Row, col: string) => {
    if (row.fill === 'orange') return ORANGE;
    if (row.fill === 'firstOrange') return col === 'A' ? ORANGE : WHITE;
    if (row.n === 16 && (col === 'O' || col === 'P')) return ORANGE;
    if (row.fill === 'all') return YELLOW;
    if (row.fill === 'fromD') return col === 'A' || col === 'C' ? WHITE : YELLOW;
    return WHITE;
};

const isLeft = (row: Row, col: string) => {
    if (row.kind === 'head') return true;
    if (row.kind === 'plain') return col === 'D' || row.n === 4;
    if (row.kind === 'setup' && col === 'I') return true;
    return col === 'G' || col === 'P';
};

const fontFor = (row: Row, col: string) => {
    const serif = row.kind === 'setup' ? 'LMNOP'.includes(col) : col === 'H' && !row.kind;
    if (serif) return "font-['Liberation_Serif',serif] text-[24px] font-normal";
    if (row.kind !== 'plain') return 'font-bold';
    return isLeft(row, col) ? 'text-[23px] font-normal' : 'font-normal';
};

const padFor = (row: Row, col: string, text: string) => {
    if (text === '$100,000') return 'pl-[10px] text-left';
    if (text === '1=Long') return 'pl-4 text-left';
    if (isLeft(row, col)) return 'pl-1 text-left';
    if (row.kind !== 'setup' && (col === 'J' || col === 'M') && !text.startsWith('(')) return 'pr-[10px] text-right';
    if (row.kind === 'setup' && col === 'J') return 'pr-[10px] text-right';
    return 'pr-1 text-right';
};

const Cell: React.FC<{ row: Row; col: string }> = ({ row, col }) => {
    const text = row.cells?.[col] ?? '';
    const parts = text.split('|');
    const selected = row.n === 1 && col === 'F';
    return (
        <td
            colSpan={row.span?.[col]}
            className={clsx(
                'relative overflow-hidden border-b p-0 align-bottom',
                col === 'A' ? 'border-r-2' : 'border-r',
                fillFor(row, col),
                fontFor(row, col),
                text.startsWith('(') && 'text-[#e3120b]',
                padFor(row, col, text),
                selected && 'outline-2 -outline-offset-2 outline-[#1e6b41]',
                row.n === 21 && col === 'M' && 'border-t border-b-[3px] border-t-black border-b-black [border-bottom-style:double]',
            )}
        >
            {parts.length > 1 ? (
                <span className={clsx('flex justify-between', col === 'F' ? 'pr-[10px] pl-[10px]' : 'pr-[3px] pl-[10px]')}>
                    <span>{parts[0]}</span>
                    <span>{parts[1]}</span>
                </span>
            ) : (
                text
            )}
        </td>
    );
};

const Sheet = () => (
    <table className="w-full table-fixed border-separate border-spacing-0 font-['Lato',sans-serif] text-[22px] leading-[29px] whitespace-nowrap text-black">
        <colgroup>
            <col className="w-[34px]" />
            {columns.map(([name, width]) => (
                <col key={name} className={width} />
            ))}
        </colgroup>
        <thead className="font-['Open_Sans',sans-serif] text-[12px] leading-4 text-[#666]">
            <tr className="h-[18px]">
                <th className="border-r border-b border-[#c0c0c0] bg-[#f3f3f3] p-0">
                    <svg viewBox="0 0 14 14" className="ml-auto h-[14px] w-[14px]">
                        <path d="M14 0v14H0z" fill="#b5b5b5" />
                    </svg>
                </th>
                {columns.map(([name]) => (
                    <th
                        key={name}
                        className={clsx(
                            'border-r border-b p-0 font-normal',
                            name === 'F' ? 'border-[#1e6b41] bg-[#d3d2d1] text-[#1e6b41]' : 'border-[#c8c8c8] bg-[#f3f3f3]',
                        )}
                    >
                        {name}
                    </th>
                ))}
            </tr>
        </thead>
        <tbody>
            {rows.map((row) => {
                let skip = 0;
                return (
                    <tr key={row.n} className={row.height}>
                        <th
                            className={clsx(
                                "border-r border-b border-b-[#dcdcdc] p-0 pr-[2px] align-bottom font-['Open_Sans',sans-serif] text-[12px] leading-[18px]",
                                row.n === 1
                                    ? 'border-r-[#1e6b41] bg-[#d3d2d1] font-bold text-[#1e6b41]'
                                    : 'border-r-[#c8c8c8] bg-[#f3f3f3] font-normal text-[#666]',
                            )}
                        >
                            {row.n}
                        </th>
                        {columns.map(([col]) => {
                            if (skip > 0) {
                                skip -= 1;
                                return null;
                            }
                            skip = (row.span?.[col] ?? 1) - 1;
                            return <Cell key={col} row={row} col={col} />;
                        })}
                    </tr>
                );
            })}
        </tbody>
    </table>
);

const Scrollbar = () => (
    <div className="mt-[18px] flex w-[14px] shrink-0 flex-col bg-[#e6e6e6]">
        <button aria-label="Scroll up" className="flex h-[22px] items-center justify-center border border-[#bbb] bg-white text-[#777]">
            <svg viewBox="0 0 6 4" className="h-1 w-[6px]" fill="currentColor">
                <path d="M0 4h6L3 0z" />
            </svg>
        </button>
        <div className="h-[75px] border border-[#bbb] bg-white" />
    </div>
);

const Excel = () => (
    <main className="flex min-w-0 flex-1 flex-col bg-[#f1f0ef] font-['Open_Sans',sans-serif]">
        <TitleBar />
        <TabBar />
        <Ribbon />
        <FormulaBar />
        <div className="flex min-h-0 flex-1 bg-[#f3f3f3]">
            <div className="relative flex min-w-0 flex-1 flex-col">
                <Sheet />
                <div className="ml-[34px] flex-1 bg-[#fab81e]" />
                <svg viewBox="0 0 14 24" className="absolute top-[293px] left-[947px] h-6 w-[14px]" fill="#fff" stroke="#000">
                    <path d="M1 1v18l4-4 3 7 3-1-3-7h5z" />
                </svg>
            </div>
            <Scrollbar />
        </div>
    </main>
);

const App: React.FC = () => (
    <div className="flex h-screen overflow-hidden bg-black">
        <WatchPanel />
        <ChartSliver />
        <Excel />
        <QuoteSliver />
    </div>
);

export default App;
